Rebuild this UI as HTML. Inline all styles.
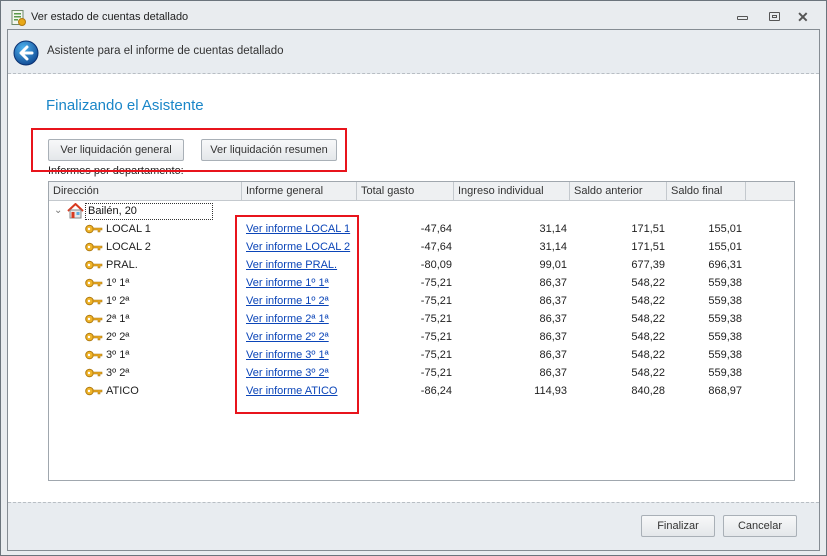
<!DOCTYPE html>
<html><head><meta charset="utf-8"><style>
*{margin:0;padding:0;box-sizing:border-box}
body{width:827px;height:556px;overflow:hidden;font-family:"Liberation Sans",sans-serif;font-size:11px;color:#1e1e1e;background:#e9ecef;position:relative}
.a{position:absolute}
.win{left:0;top:0;width:827px;height:556px;border:1px solid #6b747c;background:#e9ecef}
.frame{left:7px;top:29px;width:813px;height:522px;border:1px solid #858c93;background:#fff}
.hdr{left:0;top:0;width:811px;height:44px;background:#e8ecf0;border-bottom:1px dashed #b8bec4}
.ftr{left:0;top:472px;width:811px;height:48px;background:#e8ecf0;border-top:1px dashed #b8bec4}
.btn{border:1px solid #a9b0b7;border-radius:2px;background:linear-gradient(#f7f8f9,#e4e7ea);text-align:center;line-height:20px;font-size:11px;color:#333}
.red{border:2px solid #e8141c}
.tbl{left:48px;top:181px;width:747px;height:300px;border:1px solid #a0a7ae;background:#fff}
.th{top:0;height:19px;background:#eef0f2;border-bottom:1px solid #c4c9ce;border-right:1px solid #c4c9ce;line-height:18px;padding-left:4px;color:#333}
.row{height:18px;line-height:18px}
.lk{color:#0b45b8;text-decoration:underline}
.n{text-align:right}
</style></head><body>
<div class="a win"></div>
<svg class="a" style="left:11px;top:10px" width="16" height="16" viewBox="0 0 16 16"><rect x="1" y="0.5" width="11" height="14" fill="#f3f6ee" stroke="#6f8a6a"/><rect x="3" y="3" width="7" height="1.5" fill="#5a9a4a"/><rect x="3" y="6" width="7" height="1.5" fill="#5a9a4a"/><rect x="3" y="9" width="4" height="1.5" fill="#5a9a4a"/><circle cx="11" cy="12" r="3.5" fill="#e8a818" stroke="#b07810"/></svg>
<div class="a" style="left:31px;top:11px;font-size:11px;color:#222">Ver estado de cuentas detallado</div>
<div class="a" style="left:737px;top:16px;width:11px;height:4px;border:1px solid #555;border-radius:1px"></div>
<div class="a" style="left:769px;top:12px;width:11px;height:9px;border:1px solid #555;border-radius:1px"><div class="a" style="left:2px;top:2px;width:5px;height:3px;border:1px solid #555"></div></div>
<div class="a" style="left:797px;top:9px;font-size:14px;color:#555;font-weight:bold">✕</div>
<div class="a frame">
 <div class="a hdr"></div>
 <div class="a ftr"></div>
</div>
<svg class="a" style="left:13px;top:40px" width="26" height="26" viewBox="0 0 26 26"><defs><radialGradient id="g" cx="0.4" cy="0.3" r="0.8"><stop offset="0" stop-color="#4fb4f0"/><stop offset="1" stop-color="#0a3f8a"/></radialGradient></defs><circle cx="13" cy="13" r="12" fill="url(#g)" stroke="#0a3070"/><path d="M14 7 L8 13 L14 19 M8 13 H19" stroke="#fff" stroke-width="3" fill="none" stroke-linecap="round" stroke-linejoin="round"/></svg>
<div class="a" style="left:47px;top:45px;font-size:11.5px;color:#333">Asistente para el informe de cuentas detallado</div>
<div class="a" style="left:46px;top:97px;font-size:15px;color:#1a86c8">Finalizando el Asistente</div>
<div class="a btn" style="left:48px;top:139px;width:136px;height:22px">Ver liquidación general</div>
<div class="a btn" style="left:201px;top:139px;width:136px;height:22px">Ver liquidación resumen</div>
<div class="a" style="left:48px;top:165px;color:#222">Informes por departamento:</div>
<div class="a red" style="left:31px;top:128px;width:316px;height:44px"></div>
<div class="a tbl">
 <div class="a th" style="left:0;width:193px">Dirección</div>
 <div class="a th" style="left:193px;width:115px">Informe general</div>
 <div class="a th" style="left:308px;width:97px">Total gasto</div>
 <div class="a th" style="left:405px;width:116px">Ingreso individual</div>
 <div class="a th" style="left:521px;width:97px">Saldo anterior</div>
 <div class="a th" style="left:618px;width:79px">Saldo final</div>
 <div class="a th" style="left:697px;width:48px;border-right:none"></div>
</div>
<div class="a" style="left:54px;top:205px;color:#777;font-size:10px">⌄</div>
<svg class="a" style="left:67px;top:203px" width="17" height="16" viewBox="0 0 17 16"><path d="M1 8 L8.5 1 L16 8" fill="none" stroke="#d83a20" stroke-width="2"/><rect x="3" y="7" width="11" height="8" fill="#e8e8e8" stroke="#8a8a8a"/><rect x="4.5" y="9" width="3" height="6" fill="#d83a20"/><rect x="9.5" y="9" width="3" height="3" fill="#5aaee0"/></svg>
<div class="a" style="left:85px;top:203px;width:128px;height:17px;border:1px dotted #333;line-height:15px;padding-left:2px;color:#111">Bailén, 20</div>
<div class="a red" style="left:235px;top:215px;width:124px;height:199px"></div>
<div id="rows"></div>
<script>
var d=[["LOCAL 1","-47,64","31,14","171,51","155,01"],["LOCAL 2","-47,64","31,14","171,51","155,01"],["PRAL.","-80,09","99,01","677,39","696,31"],["1º 1ª","-75,21","86,37","548,22","559,38"],["1º 2ª","-75,21","86,37","548,22","559,38"],["2ª 1ª","-75,21","86,37","548,22","559,38"],["2º 2ª","-75,21","86,37","548,22","559,38"],["3º 1ª","-75,21","86,37","548,22","559,38"],["3º 2ª","-75,21","86,37","548,22","559,38"],["ATICO","-86,24","114,93","840,28","868,97"]];
var h="";d.forEach(function(r,i){var y=220+i*18;
h+='<svg class="a" style="left:85px;top:'+(y+4)+'px" width="18" height="10" viewBox="0 0 18 10"><circle cx="4.5" cy="5" r="3.8" fill="#f0b428" stroke="#b07a10"/><circle cx="4" cy="5" r="1.2" fill="#fff"/><path d="M8 4 H17 V6 H15 V8 H13 V6 H8Z" fill="#e8a820" stroke="#b07a10" stroke-width="0.6"/></svg>';
h+='<div class="a row" style="left:106px;top:'+y+'px">'+r[0]+'</div>';
var lk=(i==5?"2ª 1ª":r[0]);
h+='<div class="a row lk" style="left:246px;top:'+y+'px">Ver informe '+lk+'</div>';
h+='<div class="a row n" style="left:360px;width:92px;top:'+y+'px">'+r[1]+'</div>';
h+='<div class="a row n" style="left:460px;width:107px;top:'+y+'px">'+r[2]+'</div>';
h+='<div class="a row n" style="left:570px;width:95px;top:'+y+'px">'+r[3]+'</div>';
h+='<div class="a row n" style="left:670px;width:72px;top:'+y+'px">'+r[4]+'</div>';});
document.getElementById("rows").innerHTML=h;
</script>
<div class="a btn" style="left:641px;top:515px;width:74px;height:22px">Finalizar</div>
<div class="a btn" style="left:723px;top:515px;width:74px;height:22px">Cancelar</div>
</body></html>
